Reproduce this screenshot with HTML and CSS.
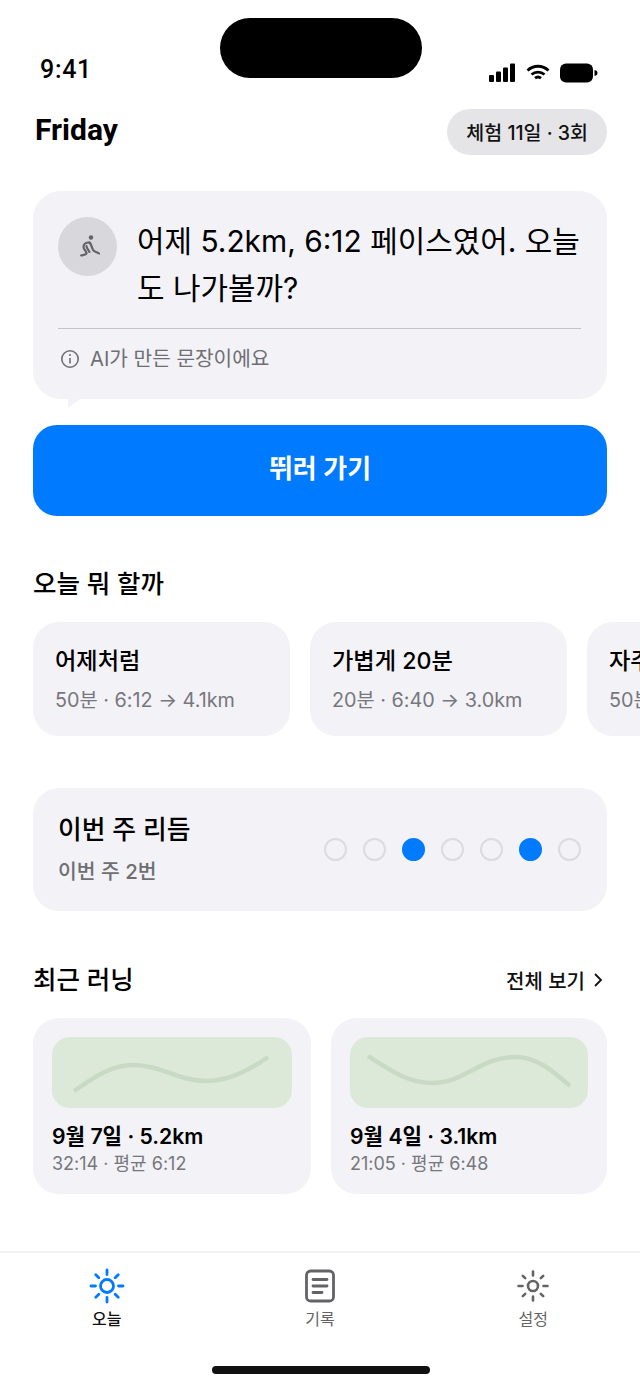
FILE: index.html
```html
<!DOCTYPE html>
<html lang="ko">

<head>
    <meta charset="UTF-8">
    <meta name="viewport" content="width=device-width, initial-scale=1.0">
    <title>Today</title>
    <link rel="stylesheet" href="styles.css">
</head>

<body>
    <div class="screen">
        <div class="island"></div>

        <div class="status-bar">
            <span class="status-time">9:41</span>
            <div class="status-icons">
                <svg width="28" height="20" viewBox="0 0 28 20" fill="#000">
                    <rect x="1" y="12" width="5" height="7" rx="1" />
                    <rect x="8" y="8.500" width="5" height="10.500" rx="1" />
                    <rect x="15" y="4.500" width="5" height="14.500" rx="1" />
                    <rect x="22" y="0.500" width="5" height="18.500" rx="1" />
                </svg>
                <svg width="24" height="18" viewBox="0 0 24 18" fill="none" stroke="#000" stroke-width="2.800">
                    <path d="M1.500 6.500C7.500 .8 16.500 .8 22.500 6.500" />
                    <path d="M5.500 10.500C9.300 7.200 14.700 7.200 18.500 10.500" />
                    <path d="M9 14.200C10.800 12.800 13.200 12.800 15 14.200" />
                </svg>
                <svg width="38" height="20" viewBox="0 0 38 20" fill="#000">
                    <rect x="0" y="0.500" width="33" height="19" rx="6" />
                    <path d="M34.500 7C36.500 7.300 37.500 8.500 37.500 10S36.500 12.700 34.500 13Z" />
                </svg>
            </div>
        </div>

        <header class="top-row">
            <h1 class="day-title">Friday</h1>
            <span class="trial-pill">체험 11일 · 3회</span>
        </header>

        <section class="coach-card">
            <div class="coach-main">
                <div class="coach-avatar">
                    <svg width="24" height="24" viewBox="0 0 24 24" fill="none" stroke="#636366" stroke-width="2.200" stroke-linecap="round" stroke-linejoin="round">
                        <circle cx="15" cy="2.500" r="2.200" fill="#636366" stroke="none" />
                        <path d="M13 7.500C10 7.500 7.500 9 7.500 12C7.500 15 11 16 10.500 18.500C10.300 19.800 7 20 5.200 20.500" />
                        <path d="M13.500 7.500C15.500 9 15.500 13 17.500 15.500C19 17 21.500 17.300 23 18.500" />
                        <path d="M10.500 11C10.500 14 13 15 13.500 17" />
                    </svg>
                </div>
                <p class="coach-text">어제 5.2km, 6:12 페이스였어. 오늘도 나가볼까?</p>
            </div>
            <div class="coach-note">
                <svg width="20" height="20" viewBox="0 0 20 20" fill="none" stroke="#6e6e73" stroke-width="1.600">
                    <circle cx="10" cy="10" r="8.200" />
                    <path d="M10 9V14.500" />
                    <circle cx="10" cy="6" r="1" fill="#6e6e73" stroke="none" />
                </svg>
                <span>AI가 만든 문장이에요</span>
            </div>
            <div class="coach-tail"></div>
        </section>

        <button class="run-btn">뛰러 가기</button>

        <h2 class="section-title plan-title">오늘 뭐 할까</h2>
        <div class="plan-row">
            <div class="plan-card">
                <div class="plan-name">어제처럼</div>
                <div class="plan-sub">50분 · 6:12 → 4.1km</div>
            </div>
            <div class="plan-card">
                <div class="plan-name">가볍게 20분</div>
                <div class="plan-sub">20분 · 6:40 → 3.0km</div>
            </div>
            <div class="plan-card">
                <div class="plan-name">자주 뛰던 코스</div>
                <div class="plan-sub">50분 · 6:20 → 4.7km</div>
            </div>
        </div>

        <section class="rhythm-card">
            <div class="rhythm-text">
                <div class="rhythm-title">이번 주 리듬</div>
                <div class="rhythm-sub">이번 주 2번</div>
            </div>
            <div class="rhythm-dots">
                <span class="dot"></span>
                <span class="dot"></span>
                <span class="dot on"></span>
                <span class="dot"></span>
                <span class="dot"></span>
                <span class="dot on"></span>
                <span class="dot"></span>
            </div>
        </section>

        <div class="recent-head">
            <h2 class="section-title">최근 러닝</h2>
            <span class="see-all">전체 보기
                <svg width="10" height="16" viewBox="0 0 10 16" fill="none" stroke="#111" stroke-width="1.800">
                    <path d="M2 2L8 8L2 14" />
                </svg>
            </span>
        </div>
        <div class="recent-row">
            <div class="run-card">
                <div class="run-map">
                    <svg width="240" height="71" viewBox="0 0 240 71" fill="none" stroke="#c8dac4" stroke-width="4.500">
                        <path d="M22 54C40 42 58 28 81 28C110 28 125 44 155 44C178 44 198 33 216 20" />
                    </svg>
                </div>
                <div class="run-name">9월 7일 · 5.2km</div>
                <div class="run-sub">32:14 · 평균 6:12</div>
            </div>
            <div class="run-card">
                <div class="run-map">
                    <svg width="238" height="71" viewBox="0 0 238 71" fill="none" stroke="#c8dac4" stroke-width="4.500">
                        <path d="M18 19C40 33 58 46 82 46C115 46 130 20 165 20C188 20 205 36 220 49" />
                    </svg>
                </div>
                <div class="run-name">9월 4일 · 3.1km</div>
                <div class="run-sub">21:05 · 평균 6:48</div>
            </div>
        </div>

        <nav class="tab-bar">
            <div class="tab-list">
                <div class="tab active">
                    <svg width="36" height="36" viewBox="0 0 36 36" fill="none" stroke="#007aff" stroke-width="2.800" stroke-linecap="round">
                        <circle cx="18" cy="18" r="6.500" />
                        <path d="M18 2V6.500M18 29.500V34M2 18H6.500M29.500 18H34M6.800 6.800L9.800 9.800M26.200 26.200L29.200 29.200M6.800 29.200L9.800 26.200M26.200 9.800L29.200 6.800" />
                    </svg>
                    <span>오늘</span>
                </div>
                <div class="tab">
                    <svg width="36" height="36" viewBox="0 0 36 36" fill="none" stroke="#636366" stroke-width="2.800" stroke-linecap="round">
                        <rect x="4.500" y="3" width="27" height="30" rx="4" />
                        <path d="M11 11.500H25M11 18H25M11 24.500H20" />
                    </svg>
                    <span>기록</span>
                </div>
                <div class="tab">
                    <svg width="36" height="36" viewBox="0 0 36 36" fill="none" stroke="#636366" stroke-width="2.600" stroke-linecap="round">
                        <circle cx="18" cy="18" r="5" />
                        <path d="M18 3.500V7.500M18 28.500V32.500M3.500 18H7.500M28.500 18H32.500M7.800 7.800L10.200 10.200M25.800 25.800L28.200 28.200M7.800 28.200L10.200 25.800M25.800 10.200L28.200 7.800" />
                    </svg>
                    <span>설정</span>
                </div>
            </div>
            <div class="home-bar"></div>
        </nav>
    </div>
</body>

</html>
```

FILE: styles.css
```css
/* General Reset */
* {
    margin: 0;
    padding: 0;
    box-sizing: border-box;
}

body {
    font-family: Inter, 'Noto Sans CJK KR', sans-serif;
    background: #ffffff;
    color: #000;
}

.screen {
    position: relative;
    width: 640px;
    height: 1387px;
    overflow: hidden;
    display: flex;
    flex-direction: column;
}

.island {
    position: absolute;
    top: 18px;
    left: 220px;
    width: 202px;
    height: 60px;
    border-radius: 30px;
    background: #000;
}

/* Status bar */
.status-bar {
    height: 109px;
    padding: 55px 42px 0 40px;
    display: flex;
    justify-content: space-between;
    align-items: flex-start;
}

.status-time {
    font-family: Roboto, sans-serif;
    font-size: 25px;
    line-height: 30px;
    font-weight: 500;
    letter-spacing: 0.7px;
}

.status-icons {
    display: flex;
    align-items: center;
    gap: 10px;
    margin-top: 8px;
}

/* Header */
.top-row {
    height: 46px;
    padding: 0 33px 0 35px;
    display: flex;
    justify-content: space-between;
    align-items: center;
}

.day-title {
    font-family: Roboto, sans-serif;
    font-size: 30px;
    font-weight: 700;
    margin-top: -5px;
}

.trial-pill {
    height: 46px;
    padding: 0 19px 2px;
    display: flex;
    align-items: center;
    border-radius: 23px;
    background: #e5e5e8;
    font-size: 19.500px;
    font-weight: 500;
    color: #111;
}

/* Coach card */
.coach-card {
    position: relative;
    margin: 36px 33px 0;
    height: 208px;
    padding: 26px 26px 0 25px;
    background: #f2f2f7;
    border-radius: 28px;
}

.coach-tail {
    position: absolute;
    left: 35px;
    bottom: -9px;
    width: 0;
    height: 0;
    border-top: 9px solid #f2f2f7;
    border-right: 12px solid transparent;
}

.coach-main {
    display: flex;
    gap: 20px;
    height: 112px;
    border-bottom: 1.500px solid #c4c4c8;
}

.coach-avatar {
    flex: none;
    width: 59px;
    height: 59px;
    border-radius: 50%;
    background: #d8d8dc;
    display: flex;
    align-items: center;
    justify-content: center;
}

.coach-text {
    font-size: 29.900px;
    line-height: 47px;
    margin-top: 1px;
    word-break: break-all;
}

.coach-note {
    margin-top: 18px;
    padding-left: 2px;
    display: flex;
    align-items: center;
    gap: 10px;
    font-size: 20.200px;
    line-height: 24px;
    color: #6e6e73;
}

/* Main action */
.run-btn {
    margin: 26px 33px 0;
    height: 91px;
    padding-bottom: 8px;
    border: none;
    border-radius: 24px;
    background: #007aff;
    color: #fff;
    font-family: inherit;
    font-size: 26px;
    font-weight: 600;
}

.section-title {
    font-size: 25.500px;
    line-height: 34px;
    font-weight: 500;
}

.plan-title {
    margin: 51px 33px 0;
}

/* Plans */
.plan-row {
    margin-top: 21px;
    padding-left: 33px;
    display: flex;
    gap: 20px;
}

.plan-card {
    flex: none;
    width: 257px;
    height: 114px;
    padding: 23px 22px 0;
    border-radius: 26px;
    background: #f2f2f7;
    white-space: nowrap;
}

.plan-name {
    font-size: 23.200px;
    line-height: 32px;
    font-weight: 500;
}

.plan-sub {
    margin-top: 10px;
    font-size: 19.800px;
    line-height: 26px;
    color: #77777c;
}

/* Weekly rhythm */
.rhythm-card {
    margin: 52px 33px 0;
    height: 123px;
    padding: 0 26px 0 25px;
    border-radius: 26px;
    background: #f2f2f7;
    display: flex;
    justify-content: space-between;
    align-items: center;
}

.rhythm-text {
    padding-bottom: 2px;
}

.rhythm-title {
    font-size: 25.800px;
    line-height: 34px;
    font-weight: 500;
}

.rhythm-sub {
    margin-top: 12px;
    font-size: 20.400px;
    line-height: 26px;
    font-weight: 500;
    color: #6e6e73;
}

.rhythm-dots {
    display: flex;
    gap: 16px;
}

.dot {
    width: 23px;
    height: 23px;
    border-radius: 50%;
    border: 2px solid #dcdcdf;
}

.dot.on {
    background: #007aff;
    border-color: #007aff;
}

/* Recent runs */
.recent-head {
    margin: 52px 37px 0 33px;
    display: flex;
    justify-content: space-between;
    align-items: center;
}

.see-all {
    display: flex;
    align-items: center;
    gap: 8px;
    font-size: 20px;
    font-weight: 500;
    color: #111;
}

.recent-row {
    margin: 21px 33px 0;
    display: flex;
    gap: 20px;
}

.run-card {
    flex: 1;
    height: 176px;
    padding: 19px 19px 0;
    border-radius: 26px;
    background: #f2f2f7;
}

.run-map {
    height: 71px;
    border-radius: 18px;
    background: #dce9d8;
    overflow: hidden;
}

.run-name {
    margin-top: 13px;
    font-size: 21.200px;
    line-height: 30px;
    font-weight: 600;
}

.run-sub {
    margin-top: 1px;
    font-size: 18px;
    line-height: 24px;
    color: #77777c;
}

/* Tab bar */
.tab-bar {
    margin-top: auto;
    height: 136px;
    border-top: 2px solid #f2f2f4;
    display: flex;
    flex-direction: column;
}

.tab-list {
    display: grid;
    grid-template-columns: repeat(3, 1fr);
    padding-top: 15px;
}

.tab {
    display: flex;
    flex-direction: column;
    align-items: center;
    gap: 5px;
    font-size: 16px;
    line-height: 20px;
    color: #636366;
}

.tab.active {
    color: #111;
    font-weight: 500;
}

.home-bar {
    margin: auto 0 13px 212px;
    width: 218px;
    height: 8px;
    border-radius: 4px;
    background: #111;
}
```
